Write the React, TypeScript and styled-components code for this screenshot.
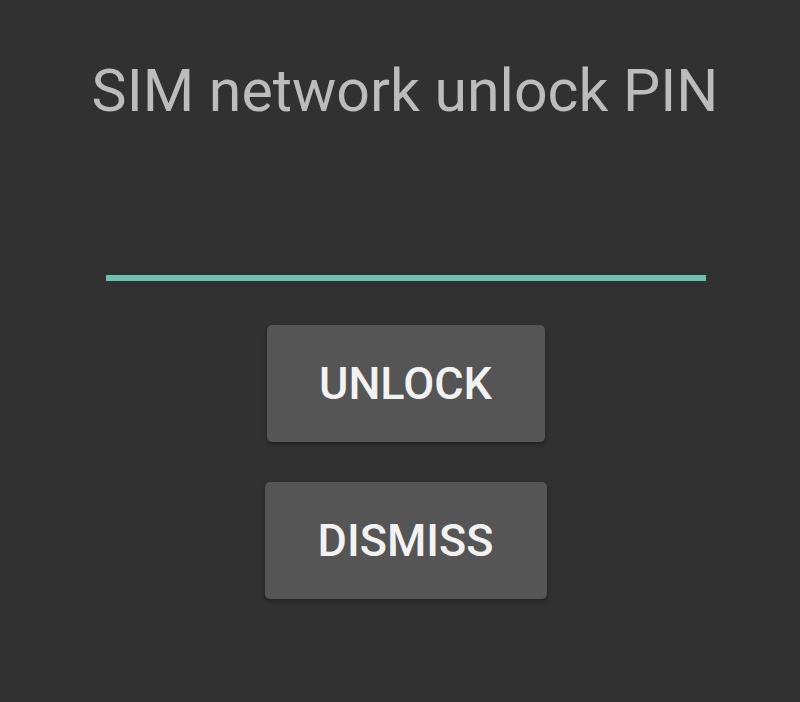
import React from "react";
import styled, { createGlobalStyle } from "styled-components";

const Global = createGlobalStyle`
  html, body { margin: 0; padding: 0; background: #313131; }
  #root { width: 800px; height: 702px; }
`;

const Screen = styled.div`
  width: 800px;
  height: 702px;
  background: #313131;
  display: flex;
  flex-direction: column;
  align-items: center;
  font-family: Roboto, "Liberation Sans", sans-serif;
  box-sizing: border-box;
  padding-top: 57px;
`;

const Title = styled.div`
  color: #bcbcbc;
  font-size: 59px;
  font-weight: 400;
  line-height: 68px;
  margin-left: 10px;
`;

const Field = styled.div`
  width: 600px;
  height: 6px;
  background: #6dbfb1;
  margin-top: 150px;
  margin-left: 12px;
`;

const Actions = styled.div`
  display: flex;
  flex-direction: column;
  align-items: center;
  gap: 40px;
  margin-top: 44px;
  margin-left: 11px;
`;

const Button = styled.button<{ $w: number }>`
  width: ${(p) => p.$w}px;
  height: 117px;
  background: #555555;
  border: none;
  border-radius: 5px;
  color: #f2f2f2;
  font-family: Roboto, "Liberation Sans", sans-serif;
  font-weight: 500;
  font-size: 45px;
  box-shadow: 0 2px 4px rgba(0, 0, 0, 0.35);
  padding: 0;
`;

export default function App() {
  return (
    <>
      <Global />
      <Screen>
        <Title>SIM network unlock PIN</Title>
        <Field />
        <Actions>
          <Button $w={278}>UNLOCK</Button>
          <Button $w={282}>DISMISS</Button>
        </Actions>
      </Screen>
    </>
  );
}
